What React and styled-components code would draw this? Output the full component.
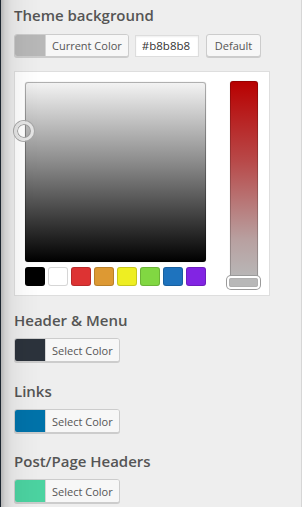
import React from "react";
import styled, { createGlobalStyle } from "styled-components";

const Global = createGlobalStyle`
  html, body { margin: 0; padding: 0; background: #eeeeee; }
  body { font-family: "Open Sans", "Noto Sans", sans-serif; color: #555; }
  #root { width: 302px; height: 507px; overflow: hidden; }
`;

const Page = styled.div`
  width: 302px;
  height: 507px;
  box-sizing: border-box;
  padding: 5px 0 0 14px;
  display: flex;
  flex-direction: column;
`;

const EdgeShadow = styled.div`
  position: fixed;
  left: 0;
  top: 0;
  bottom: 0;
  width: 42px;
  pointer-events: none;
  background: linear-gradient(
    to right,
    #1c2630 0px,
    #1c2630 1px,
    rgba(0, 0, 0, 0.24) 1px,
    rgba(0, 0, 0, 0.12) 5px,
    rgba(0, 0, 0, 0.05) 12px,
    rgba(0, 0, 0, 0.02) 24px,
    rgba(0, 0, 0, 0) 42px
  );
`;

const RightEdge = styled.div`
  position: fixed;
  right: 0;
  top: 0;
  bottom: 0;
  width: 1px;
  pointer-events: none;
  background: #d6d6d6;
`;

const Section = styled.section`
  display: flex;
  flex-direction: column;
  margin-top: ${(p) => p.$top || 0}px;
`;

const Title = styled.h3`
  margin: 0 0 ${(p) => p.$gap || 8}px 0;
  font-size: 15px;
  line-height: 20px;
  font-weight: 600;
  color: #555;
`;

const Row = styled.div`
  display: flex;
  align-items: center;
  gap: 6px;
`;

const ColorButton = styled.button`
  display: flex;
  align-items: stretch;
  height: ${(p) => p.$h || 24}px;
  padding: 0;
  border: 1px solid #cccccc;
  border-radius: 3px;
  background: #f7f7f7;
  box-shadow: 0 1px 0 #cccccc;
  overflow: hidden;
  cursor: pointer;
  font-family: inherit;
`;

const Swatch = styled.span`
  width: 30px;
  background: ${(p) => p.$color};
  border-right: 1px solid #d4d4d4;
`;

const ButtonLabel = styled.span`
  display: flex;
  align-items: center;
  padding: 0 6px;
  font-size: 11px;
  color: #555;
  background: #f7f7f7;
`;

const HexInput = styled.input`
  width: 64px;
  height: 22px;
  box-sizing: border-box;
  border: 1px solid #dddddd;
  background: #ffffff;
  padding: 0 0 0 6px;
  font-family: "Open Sans", "Noto Sans", sans-serif;
  font-size: 11.5px;
  color: #333;
  box-shadow: inset 0 1px 2px rgba(0, 0, 0, 0.07);
  outline: none;
`;

const PlainButton = styled.button`
  height: 23px;
  margin-left: 1px;
  padding: 0 8px;
  border: 1px solid #cccccc;
  border-radius: 3px;
  background: #f7f7f7;
  box-shadow: 0 1px 0 #cccccc;
  font-family: inherit;
  font-size: 11px;
  color: #555;
  cursor: pointer;
`;

const Panel = styled.div`
  margin-top: 14px;
  width: 256px;
  height: 225px;
  box-sizing: border-box;
  border: 1px solid #dedede;
  background: #ffffff;
  padding: 10px 10px 9px 10px;
  display: flex;
  justify-content: space-between;
`;

const LeftCol = styled.div`
  display: flex;
  flex-direction: column;
  gap: 5px;
`;

const Square = styled.div`
  position: relative;
  width: 181px;
  height: 180px;
  border-radius: 3px;
  background: linear-gradient(to bottom, #f4f4f4 0%, #8a8a8a 45%, #000000 100%);
  box-shadow: inset 0 0 0 1px rgba(0, 0, 0, 0.28), 0 0 1px rgba(0, 0, 0, 0.3);
`;

const Handle = styled.span`
  position: absolute;
  left: -11px;
  top: 39px;
  width: 14px;
  height: 14px;
  border-radius: 50%;
  border: 3px solid #e6e6e6;
  box-shadow: 0 0 0 1px #a9a9a9, inset 0 0 0 1px #a0a0a0;
`;

const Palette = styled.div`
  display: flex;
  gap: 3px;
`;

const Chip = styled.span`
  width: 20px;
  height: 19px;
  box-sizing: border-box;
  border-radius: 3px;
  background: ${(p) => p.$color};
  box-shadow: inset 0 0 0 1px rgba(0, 0, 0, 0.16);
`;

const StripWrap = styled.div`
  position: relative;
  width: 28px;
  height: 202px;
  margin-top: -1px;
  margin-right: 1px;
`;

const Strip = styled.div`
  width: 28px;
  height: 198px;
  border-radius: 3px;
  background: linear-gradient(to bottom, #b80000 0%, #b84848 40%, #b8a0a0 80%, #b8b8b8 100%);
  box-shadow: inset 0 0 0 1px rgba(0, 0, 0, 0.18), 0 0 1px rgba(0, 0, 0, 0.25);
`;

const SliderHandle = styled.span`
  position: absolute;
  left: -3px;
  bottom: -6px;
  width: 29px;
  height: 9px;
  border: 2px solid #ffffff;
  border-radius: 4px;
  background: #b8b8b8;
  box-shadow: 0 0 0 1px #9a9a9a, inset 0 0 1px rgba(0, 0, 0, 0.4);
`;

const palette = ["#000000", "#ffffff", "#dd3333", "#dd9933", "#eeee22", "#81d742", "#1e73be", "#8224e3"];

const options = [
  { title: "Header & Menu", color: "#2c333c", top: 14 },
  { title: "Links", color: "#0073aa", top: 19 },
  { title: "Post/Page Headers", color: "#4cd3a1", top: 18 },
];

export default function App() {
  return (
    <>
      <Global />
      <Page>
        <Section>
          <Title $gap={9}>Theme background</Title>
          <Row>
            <ColorButton $h={23}>
              <Swatch $color="#b8b8b8" />
              <ButtonLabel>Current Color</ButtonLabel>
            </ColorButton>
            <HexInput defaultValue="#b8b8b8" />
            <PlainButton>Default</PlainButton>
          </Row>
          <Panel>
            <LeftCol>
              <Square>
                <Handle />
              </Square>
              <Palette>
                {palette.map((c) => (
                  <Chip key={c} $color={c} />
                ))}
              </Palette>
            </LeftCol>
            <StripWrap>
              <Strip />
              <SliderHandle />
            </StripWrap>
          </Panel>
        </Section>
        {options.map((o) => (
          <Section key={o.title} $top={o.top}>
            <Title>{o.title}</Title>
            <Row>
              <ColorButton>
                <Swatch $color={o.color} />
                <ButtonLabel>Select Color</ButtonLabel>
              </ColorButton>
            </Row>
          </Section>
        ))}
      </Page>
      <EdgeShadow />
      <RightEdge />
    </>
  );
}
